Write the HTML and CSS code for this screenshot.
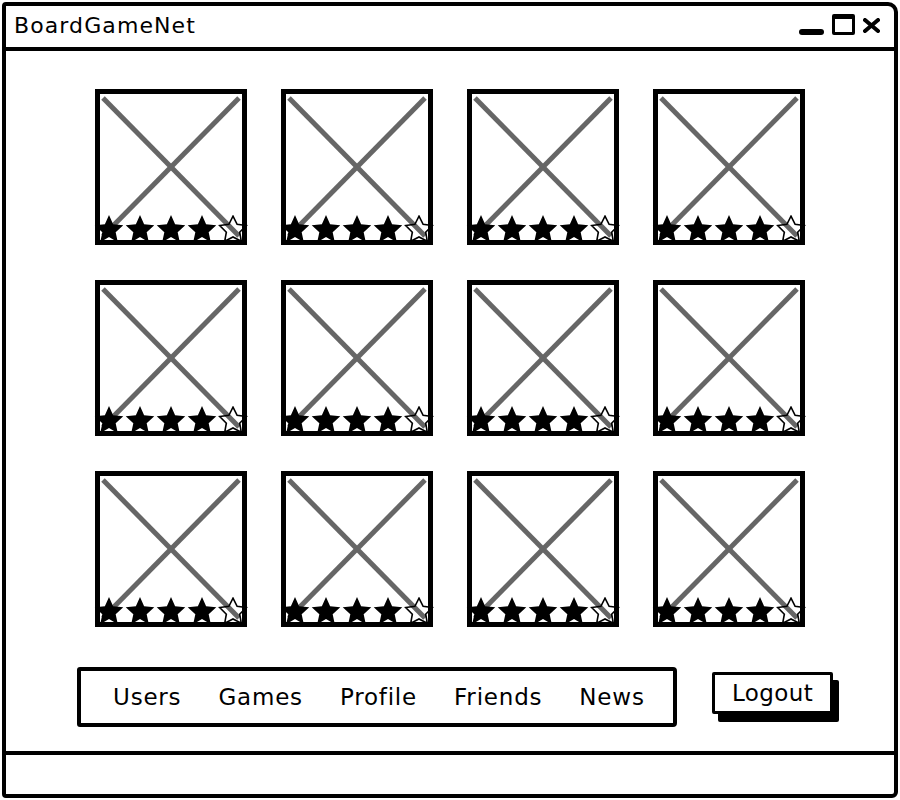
FILE: index.html
```html
<!DOCTYPE html>
<html>
<head>
<meta charset="utf-8">
<title>BoardGameNet</title>
<link rel="stylesheet" href="styles.css">
</head>
<body>
<div class="window">
  <div class="titlebar">
    <span class="title">BoardGameNet</span>
    <div class="controls">
      <span class="ctl-min"></span>
      <span class="ctl-max"></span>
      <svg class="ctl-close" viewBox="0 0 17 15"><line x1="2" y1="2" x2="15" y2="13"/><line x1="15" y1="2" x2="2" y2="13"/></svg>
    </div>
  </div>
  <div class="main">
    <div class="grid">
      <div class="card"><svg class="ph" viewBox="0 0 142 146" preserveAspectRatio="none"><line x1="3" y1="4" x2="139" y2="142"/><line x1="139" y1="4" x2="3" y2="142"/></svg><div class="stars"><svg class="star" viewBox="0 0 30 28"><polygon points="15,0 19.11,9.34 29.27,10.36 21.66,17.16 23.82,27.14 15,22 6.18,27.14 8.34,17.16 0.73,10.36 10.89,9.34"/></svg><svg class="star" viewBox="0 0 30 28"><polygon points="15,0 19.11,9.34 29.27,10.36 21.66,17.16 23.82,27.14 15,22 6.18,27.14 8.34,17.16 0.73,10.36 10.89,9.34"/></svg><svg class="star" viewBox="0 0 30 28"><polygon points="15,0 19.11,9.34 29.27,10.36 21.66,17.16 23.82,27.14 15,22 6.18,27.14 8.34,17.16 0.73,10.36 10.89,9.34"/></svg><svg class="star" viewBox="0 0 30 28"><polygon points="15,0 19.11,9.34 29.27,10.36 21.66,17.16 23.82,27.14 15,22 6.18,27.14 8.34,17.16 0.73,10.36 10.89,9.34"/></svg><svg class="star empty" viewBox="0 0 30 28"><polygon points="15,1.2 19.11,9.34 28.27,10.5 21.66,17.16 23.3,26.2 15,22 6.7,26.2 8.34,17.16 1.73,10.5 10.89,9.34"/></svg></div></div>
      <div class="card"><svg class="ph" viewBox="0 0 142 146" preserveAspectRatio="none"><line x1="3" y1="4" x2="139" y2="142"/><line x1="139" y1="4" x2="3" y2="142"/></svg><div class="stars"><svg class="star" viewBox="0 0 30 28"><polygon points="15,0 19.11,9.34 29.27,10.36 21.66,17.16 23.82,27.14 15,22 6.18,27.14 8.34,17.16 0.73,10.36 10.89,9.34"/></svg><svg class="star" viewBox="0 0 30 28"><polygon points="15,0 19.11,9.34 29.27,10.36 21.66,17.16 23.82,27.14 15,22 6.18,27.14 8.34,17.16 0.73,10.36 10.89,9.34"/></svg><svg class="star" viewBox="0 0 30 28"><polygon points="15,0 19.11,9.34 29.27,10.36 21.66,17.16 23.82,27.14 15,22 6.18,27.14 8.34,17.16 0.73,10.36 10.89,9.34"/></svg><svg class="star" viewBox="0 0 30 28"><polygon points="15,0 19.11,9.34 29.27,10.36 21.66,17.16 23.82,27.14 15,22 6.18,27.14 8.34,17.16 0.73,10.36 10.89,9.34"/></svg><svg class="star empty" viewBox="0 0 30 28"><polygon points="15,1.2 19.11,9.34 28.27,10.5 21.66,17.16 23.3,26.2 15,22 6.7,26.2 8.34,17.16 1.73,10.5 10.89,9.34"/></svg></div></div>
      <div class="card"><svg class="ph" viewBox="0 0 142 146" preserveAspectRatio="none"><line x1="3" y1="4" x2="139" y2="142"/><line x1="139" y1="4" x2="3" y2="142"/></svg><div class="stars"><svg class="star" viewBox="0 0 30 28"><polygon points="15,0 19.11,9.34 29.27,10.36 21.66,17.16 23.82,27.14 15,22 6.18,27.14 8.34,17.16 0.73,10.36 10.89,9.34"/></svg><svg class="star" viewBox="0 0 30 28"><polygon points="15,0 19.11,9.34 29.27,10.36 21.66,17.16 23.82,27.14 15,22 6.18,27.14 8.34,17.16 0.73,10.36 10.89,9.34"/></svg><svg class="star" viewBox="0 0 30 28"><polygon points="15,0 19.11,9.34 29.27,10.36 21.66,17.16 23.82,27.14 15,22 6.18,27.14 8.34,17.16 0.73,10.36 10.89,9.34"/></svg><svg class="star" viewBox="0 0 30 28"><polygon points="15,0 19.11,9.34 29.27,10.36 21.66,17.16 23.82,27.14 15,22 6.18,27.14 8.34,17.16 0.73,10.36 10.89,9.34"/></svg><svg class="star empty" viewBox="0 0 30 28"><polygon points="15,1.2 19.11,9.34 28.27,10.5 21.66,17.16 23.3,26.2 15,22 6.7,26.2 8.34,17.16 1.73,10.5 10.89,9.34"/></svg></div></div>
      <div class="card"><svg class="ph" viewBox="0 0 142 146" preserveAspectRatio="none"><line x1="3" y1="4" x2="139" y2="142"/><line x1="139" y1="4" x2="3" y2="142"/></svg><div class="stars"><svg class="star" viewBox="0 0 30 28"><polygon points="15,0 19.11,9.34 29.27,10.36 21.66,17.16 23.82,27.14 15,22 6.18,27.14 8.34,17.16 0.73,10.36 10.89,9.34"/></svg><svg class="star" viewBox="0 0 30 28"><polygon points="15,0 19.11,9.34 29.27,10.36 21.66,17.16 23.82,27.14 15,22 6.18,27.14 8.34,17.16 0.73,10.36 10.89,9.34"/></svg><svg class="star" viewBox="0 0 30 28"><polygon points="15,0 19.11,9.34 29.27,10.36 21.66,17.16 23.82,27.14 15,22 6.18,27.14 8.34,17.16 0.73,10.36 10.89,9.34"/></svg><svg class="star" viewBox="0 0 30 28"><polygon points="15,0 19.11,9.34 29.27,10.36 21.66,17.16 23.82,27.14 15,22 6.18,27.14 8.34,17.16 0.73,10.36 10.89,9.34"/></svg><svg class="star empty" viewBox="0 0 30 28"><polygon points="15,1.2 19.11,9.34 28.27,10.5 21.66,17.16 23.3,26.2 15,22 6.7,26.2 8.34,17.16 1.73,10.5 10.89,9.34"/></svg></div></div>
      <div class="card"><svg class="ph" viewBox="0 0 142 146" preserveAspectRatio="none"><line x1="3" y1="4" x2="139" y2="142"/><line x1="139" y1="4" x2="3" y2="142"/></svg><div class="stars"><svg class="star" viewBox="0 0 30 28"><polygon points="15,0 19.11,9.34 29.27,10.36 21.66,17.16 23.82,27.14 15,22 6.18,27.14 8.34,17.16 0.73,10.36 10.89,9.34"/></svg><svg class="star" viewBox="0 0 30 28"><polygon points="15,0 19.11,9.34 29.27,10.36 21.66,17.16 23.82,27.14 15,22 6.18,27.14 8.34,17.16 0.73,10.36 10.89,9.34"/></svg><svg class="star" viewBox="0 0 30 28"><polygon points="15,0 19.11,9.34 29.27,10.36 21.66,17.16 23.82,27.14 15,22 6.18,27.14 8.34,17.16 0.73,10.36 10.89,9.34"/></svg><svg class="star" viewBox="0 0 30 28"><polygon points="15,0 19.11,9.34 29.27,10.36 21.66,17.16 23.82,27.14 15,22 6.18,27.14 8.34,17.16 0.73,10.36 10.89,9.34"/></svg><svg class="star empty" viewBox="0 0 30 28"><polygon points="15,1.2 19.11,9.34 28.27,10.5 21.66,17.16 23.3,26.2 15,22 6.7,26.2 8.34,17.16 1.73,10.5 10.89,9.34"/></svg></div></div>
      <div class="card"><svg class="ph" viewBox="0 0 142 146" preserveAspectRatio="none"><line x1="3" y1="4" x2="139" y2="142"/><line x1="139" y1="4" x2="3" y2="142"/></svg><div class="stars"><svg class="star" viewBox="0 0 30 28"><polygon points="15,0 19.11,9.34 29.27,10.36 21.66,17.16 23.82,27.14 15,22 6.18,27.14 8.34,17.16 0.73,10.36 10.89,9.34"/></svg><svg class="star" viewBox="0 0 30 28"><polygon points="15,0 19.11,9.34 29.27,10.36 21.66,17.16 23.82,27.14 15,22 6.18,27.14 8.34,17.16 0.73,10.36 10.89,9.34"/></svg><svg class="star" viewBox="0 0 30 28"><polygon points="15,0 19.11,9.34 29.27,10.36 21.66,17.16 23.82,27.14 15,22 6.18,27.14 8.34,17.16 0.73,10.36 10.89,9.34"/></svg><svg class="star" viewBox="0 0 30 28"><polygon points="15,0 19.11,9.34 29.27,10.36 21.66,17.16 23.82,27.14 15,22 6.18,27.14 8.34,17.16 0.73,10.36 10.89,9.34"/></svg><svg class="star empty" viewBox="0 0 30 28"><polygon points="15,1.2 19.11,9.34 28.27,10.5 21.66,17.16 23.3,26.2 15,22 6.7,26.2 8.34,17.16 1.73,10.5 10.89,9.34"/></svg></div></div>
      <div class="card"><svg class="ph" viewBox="0 0 142 146" preserveAspectRatio="none"><line x1="3" y1="4" x2="139" y2="142"/><line x1="139" y1="4" x2="3" y2="142"/></svg><div class="stars"><svg class="star" viewBox="0 0 30 28"><polygon points="15,0 19.11,9.34 29.27,10.36 21.66,17.16 23.82,27.14 15,22 6.18,27.14 8.34,17.16 0.73,10.36 10.89,9.34"/></svg><svg class="star" viewBox="0 0 30 28"><polygon points="15,0 19.11,9.34 29.27,10.36 21.66,17.16 23.82,27.14 15,22 6.18,27.14 8.34,17.16 0.73,10.36 10.89,9.34"/></svg><svg class="star" viewBox="0 0 30 28"><polygon points="15,0 19.11,9.34 29.27,10.36 21.66,17.16 23.82,27.14 15,22 6.18,27.14 8.34,17.16 0.73,10.36 10.89,9.34"/></svg><svg class="star" viewBox="0 0 30 28"><polygon points="15,0 19.11,9.34 29.27,10.36 21.66,17.16 23.82,27.14 15,22 6.18,27.14 8.34,17.16 0.73,10.36 10.89,9.34"/></svg><svg class="star empty" viewBox="0 0 30 28"><polygon points="15,1.2 19.11,9.34 28.27,10.5 21.66,17.16 23.3,26.2 15,22 6.7,26.2 8.34,17.16 1.73,10.5 10.89,9.34"/></svg></div></div>
      <div class="card"><svg class="ph" viewBox="0 0 142 146" preserveAspectRatio="none"><line x1="3" y1="4" x2="139" y2="142"/><line x1="139" y1="4" x2="3" y2="142"/></svg><div class="stars"><svg class="star" viewBox="0 0 30 28"><polygon points="15,0 19.11,9.34 29.27,10.36 21.66,17.16 23.82,27.14 15,22 6.18,27.14 8.34,17.16 0.73,10.36 10.89,9.34"/></svg><svg class="star" viewBox="0 0 30 28"><polygon points="15,0 19.11,9.34 29.27,10.36 21.66,17.16 23.82,27.14 15,22 6.18,27.14 8.34,17.16 0.73,10.36 10.89,9.34"/></svg><svg class="star" viewBox="0 0 30 28"><polygon points="15,0 19.11,9.34 29.27,10.36 21.66,17.16 23.82,27.14 15,22 6.18,27.14 8.34,17.16 0.73,10.36 10.89,9.34"/></svg><svg class="star" viewBox="0 0 30 28"><polygon points="15,0 19.11,9.34 29.27,10.36 21.66,17.16 23.82,27.14 15,22 6.18,27.14 8.34,17.16 0.73,10.36 10.89,9.34"/></svg><svg class="star empty" viewBox="0 0 30 28"><polygon points="15,1.2 19.11,9.34 28.27,10.5 21.66,17.16 23.3,26.2 15,22 6.7,26.2 8.34,17.16 1.73,10.5 10.89,9.34"/></svg></div></div>
      <div class="card"><svg class="ph" viewBox="0 0 142 146" preserveAspectRatio="none"><line x1="3" y1="4" x2="139" y2="142"/><line x1="139" y1="4" x2="3" y2="142"/></svg><div class="stars"><svg class="star" viewBox="0 0 30 28"><polygon points="15,0 19.11,9.34 29.27,10.36 21.66,17.16 23.82,27.14 15,22 6.18,27.14 8.34,17.16 0.73,10.36 10.89,9.34"/></svg><svg class="star" viewBox="0 0 30 28"><polygon points="15,0 19.11,9.34 29.27,10.36 21.66,17.16 23.82,27.14 15,22 6.18,27.14 8.34,17.16 0.73,10.36 10.89,9.34"/></svg><svg class="star" viewBox="0 0 30 28"><polygon points="15,0 19.11,9.34 29.27,10.36 21.66,17.16 23.82,27.14 15,22 6.18,27.14 8.34,17.16 0.73,10.36 10.89,9.34"/></svg><svg class="star" viewBox="0 0 30 28"><polygon points="15,0 19.11,9.34 29.27,10.36 21.66,17.16 23.82,27.14 15,22 6.18,27.14 8.34,17.16 0.73,10.36 10.89,9.34"/></svg><svg class="star empty" viewBox="0 0 30 28"><polygon points="15,1.2 19.11,9.34 28.27,10.5 21.66,17.16 23.3,26.2 15,22 6.7,26.2 8.34,17.16 1.73,10.5 10.89,9.34"/></svg></div></div>
      <div class="card"><svg class="ph" viewBox="0 0 142 146" preserveAspectRatio="none"><line x1="3" y1="4" x2="139" y2="142"/><line x1="139" y1="4" x2="3" y2="142"/></svg><div class="stars"><svg class="star" viewBox="0 0 30 28"><polygon points="15,0 19.11,9.34 29.27,10.36 21.66,17.16 23.82,27.14 15,22 6.18,27.14 8.34,17.16 0.73,10.36 10.89,9.34"/></svg><svg class="star" viewBox="0 0 30 28"><polygon points="15,0 19.11,9.34 29.27,10.36 21.66,17.16 23.82,27.14 15,22 6.18,27.14 8.34,17.16 0.73,10.36 10.89,9.34"/></svg><svg class="star" viewBox="0 0 30 28"><polygon points="15,0 19.11,9.34 29.27,10.36 21.66,17.16 23.82,27.14 15,22 6.18,27.14 8.34,17.16 0.73,10.36 10.89,9.34"/></svg><svg class="star" viewBox="0 0 30 28"><polygon points="15,0 19.11,9.34 29.27,10.36 21.66,17.16 23.82,27.14 15,22 6.18,27.14 8.34,17.16 0.73,10.36 10.89,9.34"/></svg><svg class="star empty" viewBox="0 0 30 28"><polygon points="15,1.2 19.11,9.34 28.27,10.5 21.66,17.16 23.3,26.2 15,22 6.7,26.2 8.34,17.16 1.73,10.5 10.89,9.34"/></svg></div></div>
      <div class="card"><svg class="ph" viewBox="0 0 142 146" preserveAspectRatio="none"><line x1="3" y1="4" x2="139" y2="142"/><line x1="139" y1="4" x2="3" y2="142"/></svg><div class="stars"><svg class="star" viewBox="0 0 30 28"><polygon points="15,0 19.11,9.34 29.27,10.36 21.66,17.16 23.82,27.14 15,22 6.18,27.14 8.34,17.16 0.73,10.36 10.89,9.34"/></svg><svg class="star" viewBox="0 0 30 28"><polygon points="15,0 19.11,9.34 29.27,10.36 21.66,17.16 23.82,27.14 15,22 6.18,27.14 8.34,17.16 0.73,10.36 10.89,9.34"/></svg><svg class="star" viewBox="0 0 30 28"><polygon points="15,0 19.11,9.34 29.27,10.36 21.66,17.16 23.82,27.14 15,22 6.18,27.14 8.34,17.16 0.73,10.36 10.89,9.34"/></svg><svg class="star" viewBox="0 0 30 28"><polygon points="15,0 19.11,9.34 29.27,10.36 21.66,17.16 23.82,27.14 15,22 6.18,27.14 8.34,17.16 0.73,10.36 10.89,9.34"/></svg><svg class="star empty" viewBox="0 0 30 28"><polygon points="15,1.2 19.11,9.34 28.27,10.5 21.66,17.16 23.3,26.2 15,22 6.7,26.2 8.34,17.16 1.73,10.5 10.89,9.34"/></svg></div></div>
      <div class="card"><svg class="ph" viewBox="0 0 142 146" preserveAspectRatio="none"><line x1="3" y1="4" x2="139" y2="142"/><line x1="139" y1="4" x2="3" y2="142"/></svg><div class="stars"><svg class="star" viewBox="0 0 30 28"><polygon points="15,0 19.11,9.34 29.27,10.36 21.66,17.16 23.82,27.14 15,22 6.18,27.14 8.34,17.16 0.73,10.36 10.89,9.34"/></svg><svg class="star" viewBox="0 0 30 28"><polygon points="15,0 19.11,9.34 29.27,10.36 21.66,17.16 23.82,27.14 15,22 6.18,27.14 8.34,17.16 0.73,10.36 10.89,9.34"/></svg><svg class="star" viewBox="0 0 30 28"><polygon points="15,0 19.11,9.34 29.27,10.36 21.66,17.16 23.82,27.14 15,22 6.18,27.14 8.34,17.16 0.73,10.36 10.89,9.34"/></svg><svg class="star" viewBox="0 0 30 28"><polygon points="15,0 19.11,9.34 29.27,10.36 21.66,17.16 23.82,27.14 15,22 6.18,27.14 8.34,17.16 0.73,10.36 10.89,9.34"/></svg><svg class="star empty" viewBox="0 0 30 28"><polygon points="15,1.2 19.11,9.34 28.27,10.5 21.66,17.16 23.3,26.2 15,22 6.7,26.2 8.34,17.16 1.73,10.5 10.89,9.34"/></svg></div></div>
    </div>
    <div class="bottom">
      <nav class="nav">
        <a class="nav-link">Users</a>
        <a class="nav-link">Games</a>
        <a class="nav-link">Profile</a>
        <a class="nav-link">Friends</a>
        <a class="nav-link">News</a>
      </nav>
      <button class="logout">Logout</button>
    </div>
  </div>
  <div class="footer"></div>
</div>
</body>
</html>
```
FILE: styles.css
```css
html, body {
  margin: 0;
  padding: 0;
  background: #fff;
}
body {
  font-family: "DejaVu Sans", "Liberation Sans", sans-serif;
  color: #000;
}
.window {
  margin: 2px;
  width: 896px;
  height: 796px;
  box-sizing: border-box;
  border: 4px solid #000;
  border-radius: 4px 10px 6px 4px;
  display: flex;
  flex-direction: column;
  overflow: hidden;
}
.titlebar {
  height: 45px;
  flex: none;
  box-sizing: border-box;
  border-bottom: 4px solid #000;
  display: flex;
  align-items: center;
  justify-content: space-between;
  padding: 0 14px 0 8px;
}
.title {
  font-size: 22px;
  letter-spacing: 1.1px;
  line-height: 26px;
  margin-top: -2px;
}
.controls {
  display: flex;
  align-items: flex-end;
  gap: 8px;
  height: 21px;
  margin-bottom: 4px;
}
.ctl-min {
  width: 25px;
  height: 6px;
  background: #000;
  border-radius: 3px;
}
.ctl-max {
  width: 23px;
  height: 21px;
  box-sizing: border-box;
  border: 3px solid #000;
  border-top-width: 5px;
  border-radius: 2px;
}
.ctl-close {
  width: 17px;
  height: 15px;
  margin-bottom: 2px;
}
.ctl-close line {
  stroke: #000;
  stroke-width: 4;
  stroke-linecap: round;
}
.main {
  flex: 1;
  box-sizing: border-box;
  padding-top: 38px;
}
.grid {
  display: grid;
  grid-template-columns: repeat(4, 152px);
  grid-auto-rows: 156px;
  column-gap: 34px;
  row-gap: 35px;
  justify-content: center;
}
.card {
  position: relative;
  border: 5px solid #000;
  box-sizing: border-box;
  background: #fff;
}
.ph {
  display: block;
  width: 100%;
  height: 100%;
}
.ph line {
  stroke: #666;
  stroke-width: 5;
}
.stars {
  position: absolute;
  left: -6px;
  bottom: -3px;
  display: flex;
  gap: 1px;
}
.star {
  width: 30px;
  height: 28px;
  display: block;
}
.star polygon {
  fill: #000;
}
.star.empty polygon {
  fill: none;
  stroke: #000;
  stroke-width: 1.6;
  stroke-linejoin: miter;
}
.bottom {
  display: flex;
  align-items: flex-start;
  gap: 35px;
  margin-top: 40px;
  padding-left: 71px;
}
.nav {
  width: 600px;
  height: 60px;
  box-sizing: border-box;
  border: 4px solid #000;
  border-radius: 3px 4px 4px 3px;
  display: flex;
  align-items: center;
  gap: 37px;
  padding-left: 32px;
  font-size: 23px;
  letter-spacing: 0.8px;
}
.nav-link {
  color: #000;
  text-decoration: none;
  line-height: 28px;
}
.logout {
  margin-top: 5px;
  width: 121px;
  height: 42px;
  box-sizing: border-box;
  border: 3px solid #000;
  border-radius: 2px;
  box-shadow: 6px 8px 0 #000;
  background: #fff;
  font-family: "DejaVu Sans", "Liberation Sans", sans-serif;
  font-size: 23px;
  letter-spacing: 0.4px;
  color: #000;
  padding: 0;
  line-height: 30px;
}
.footer {
  height: 43px;
  flex: none;
  box-sizing: border-box;
  border-top: 4px solid #000;
}
```
